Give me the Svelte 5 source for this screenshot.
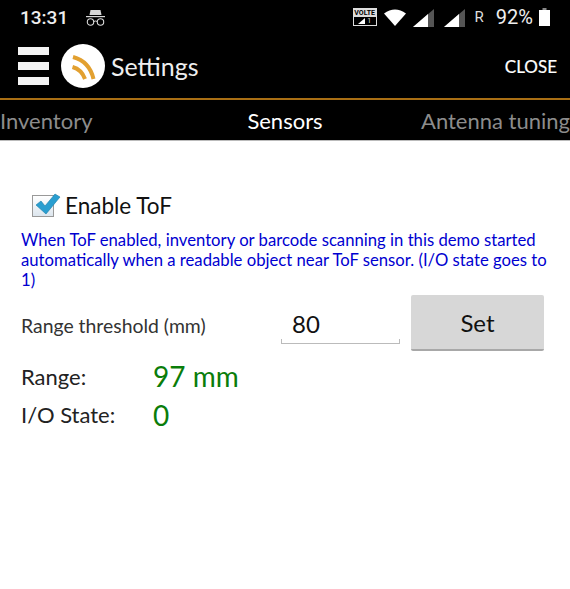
<script>
  let tabs = [
    { name: 'Inventory', active: false },
    { name: 'Sensors', active: true },
    { name: 'Antenna tuning', active: false }
  ]
</script>

<div class="screen">
  <header class="top">
    <div class="status">
      <span class="time">13:31</span>
      <svg class="incognito" width="19" height="18" viewBox="0 0 19 18">
        <path d="M4.5 1 L14.5 1 L15.5 6 L3.5 6 Z" fill="#d8d8d8" />
        <rect x="0" y="7" width="19" height="1.2" fill="#d8d8d8" />
        <circle cx="4.5" cy="13" r="3.2" fill="none" stroke="#d8d8d8" stroke-width="1.1" />
        <circle cx="14.5" cy="13" r="3.2" fill="none" stroke="#d8d8d8" stroke-width="1.1" />
        <path d="M7.7 12.5 Q9.5 11.5 11.3 12.5" fill="none" stroke="#d8d8d8" stroke-width="1" />
      </svg>
      <div class="spacer"></div>
      <div class="volte">
        <span class="volte-top">VOLTE</span>
        <span class="volte-bot">
          <svg width="7" height="6" viewBox="0 0 7 6"><path d="M0 6 L7 0 L7 6 Z" fill="#fff" /></svg>
          <b>1</b>
        </span>
      </div>
      <svg class="wifi" width="22" height="17" viewBox="0 0 22 17"><path d="M0 4.5 Q11 -3.5 22 4.5 L11 17 Z" fill="#fff" /></svg>
      <svg class="sig" width="21" height="18" viewBox="0 0 21 18">
        <path d="M0 18 L21 0 L21 18 Z" fill="#555" />
        <path d="M0 18 L15 5.1 L15 18 Z" fill="#fff" />
      </svg>
      <svg class="sig second" width="21" height="18" viewBox="0 0 21 18">
        <path d="M0 18 L21 0 L21 18 Z" fill="#555" />
        <path d="M0 18 L15 5.1 L15 18 Z" fill="#fff" />
      </svg>
      <span class="roam">R</span>
      <span class="batt-text">92%</span>
      <svg class="batt" width="11" height="18" viewBox="0 0 11 18">
        <rect x="3.5" y="0" width="4" height="2" fill="#888" />
        <rect x="0" y="2" width="11" height="16" fill="#fff" />
      </svg>
    </div>

    <div class="toolbar">
      <div class="burger"><span></span><span></span><span></span></div>
      <div class="logo">
        <svg width="44" height="44" viewBox="0 0 44 44">
          <circle cx="22" cy="22" r="22" fill="#fff" />
          <path d="M12 13 C23 16 30 24 32.5 35" fill="none" stroke="#e2a030" stroke-width="4" />
          <path d="M11.5 23 C17 24.5 21.5 28 24 35" fill="none" stroke="#e2a030" stroke-width="4" />
        </svg>
      </div>
      <span class="title">Settings</span>
      <span class="close">CLOSE</span>
    </div>

    <nav class="tabs">
      {#each tabs as tab}
        <span class="tab" class:active={tab.active}>{tab.name}</span>
      {/each}
    </nav>
  </header>

  <main class="content">
    <label class="check-row">
      <span class="box">
        <svg width="30" height="28" viewBox="0 0 30 28">
          <path d="M4 14 L9 10 L13 15 L23 3 L28 6 L14 23 Z" fill="#2a9ed0" stroke="#1b7ea8" stroke-width="0.6" />
        </svg>
      </span>
      <span class="check-label">Enable ToF</span>
    </label>

    <p class="note">When ToF enabled, inventory or barcode scanning in this demo started automatically when a readable object near ToF sensor. (I/O state goes to 1)</p>

    <div class="threshold">
      <span class="th-label">Range threshold (mm)</span>
      <div class="input">80</div>
      <button class="set">Set</button>
    </div>

    <div class="reading first">
      <span class="r-label">Range:</span>
      <span class="r-value">97 mm</span>
    </div>
    <div class="reading">
      <span class="r-label">I/O State:</span>
      <span class="r-value">0</span>
    </div>
  </main>
</div>

<style>
  :global(body) {
    margin: 0;
    background: #fff;
  }

  .screen {
    width: 570px;
    height: 589px;
    overflow: hidden;
    font-family: Lato, "Open Sans", sans-serif;
  }

  .top {
    background: #000;
    height: 140px;
    border-bottom: 1px solid #bbb;
  }

  .status {
    display: flex;
    align-items: center;
    height: 34px;
    padding: 0 20px 0 20px;
  }

  .time {
    font-family: Roboto, sans-serif;
    font-size: 19px;
    font-weight: 500;
    color: #eee;
  }

  .incognito {
    margin-left: 18px;
    margin-top: 1px;
  }

  .spacer {
    flex: 1;
  }

  .volte {
    width: 22px;
    height: 16px;
    display: flex;
    flex-direction: column;
    border: 1px solid #ddd;
    margin-top: -1px;
  }

  .volte-top {
    background: #ddd;
    color: #000;
    font-family: Roboto, sans-serif;
    font-size: 7px;
    font-weight: 700;
    line-height: 8px;
    text-align: center;
  }

  .volte-bot {
    display: flex;
    justify-content: center;
    align-items: center;
    gap: 2px;
    height: 8px;
  }

  .volte-bot b {
    color: #ddd;
    font-family: Roboto, sans-serif;
    font-size: 7px;
    font-weight: 400;
    line-height: 8px;
  }

  .wifi {
    margin-left: 7px;
  }

  .sig {
    margin-left: 7px;
    margin-top: 1px;
  }

  .sig.second {
    margin-left: 10px;
  }

  .roam {
    font-family: Roboto, sans-serif;
    font-size: 15px;
    color: #ddd;
    margin-left: 10px;
  }

  .batt-text {
    font-family: Roboto, sans-serif;
    font-size: 20px;
    color: #eee;
    margin-left: 12px;
  }

  .batt {
    margin-left: 6px;
  }

  .toolbar {
    display: flex;
    align-items: center;
    height: 64px;
    padding: 0 18px;
    border-bottom: 2px solid #a96f14;
  }

  .burger {
    width: 31px;
    display: flex;
    flex-direction: column;
    gap: 7px;
  }

  .burger span {
    height: 8px;
    background: #f4f4f4;
  }

  .logo {
    display: flex;
    margin-left: 12px;
  }

  .title {
    font-size: 25px;
    color: #eee;
    margin-left: 6px;
  }

  .close {
    margin-left: auto;
    margin-right: -5px;
    font-size: 17px;
    color: #fff;
    -webkit-text-stroke: 0.2px #fff;
  }

  .tabs {
    display: grid;
    grid-template-columns: 1fr auto 1fr;
    align-items: center;
    height: 39px;
    padding-top: 1px;
  }

  .tab {
    font-size: 22px;
    color: #8c8c8c;
    white-space: nowrap;
  }

  .tab:last-child {
    justify-self: end;
  }

  .tab.active {
    color: #fff;
  }

  .content {
    padding: 0 21px;
  }

  .check-row {
    display: flex;
    align-items: center;
    padding: 49px 0 0 11px;
    height: 30px;
  }

  .box {
    position: relative;
    width: 20px;
    height: 20px;
    border: 1px solid #999;
    background: linear-gradient(#fff, #dde6ee);
    margin-top: 1px;
  }

  .box svg {
    position: absolute;
    left: -1px;
    top: -5px;
  }

  .check-label {
    font-size: 22.5px;
    color: #111;
    margin-left: 11px;
  }

  .note {
    margin: 10px 0 0;
    font-size: 16.7px;
    line-height: 20px;
    color: #0000d0;
  }

  .threshold {
    display: flex;
    align-items: center;
    margin-top: 5px;
    height: 56px;
  }

  .th-label {
    width: 260px;
    font-size: 19.4px;
    color: #333;
    margin-top: 5px;
  }

  .input {
    width: 108px;
    padding: 0 0 4px 11px;
    height: 30px;
    margin-top: 7px;
    font-size: 24px;
    line-height: 30px;
    color: #111;
    border-bottom: 1px solid #bbb;
    background:
      linear-gradient(#bbb, #bbb) left bottom / 1px 4px no-repeat,
      linear-gradient(#bbb, #bbb) right bottom / 1px 4px no-repeat;
  }

  .set {
    width: 133px;
    height: 56px;
    margin-left: 11px;
    font-family: inherit;
    font-size: 24px;
    color: #111;
    background: #d7d7d7;
    border: 0;
    border-bottom: 2px solid #a8a8a8;
    border-radius: 2px;
  }

  .reading {
    display: flex;
    align-items: center;
    height: 39px;
  }

  .reading.first {
    margin-top: 5px;
  }

  .r-label {
    width: 132px;
    font-size: 22px;
    color: #222;
  }

  .reading.first .r-label {
    margin-top: 2px;
  }

  .r-value {
    font-size: 28px;
    color: #0a7d0a;
  }
</style>
